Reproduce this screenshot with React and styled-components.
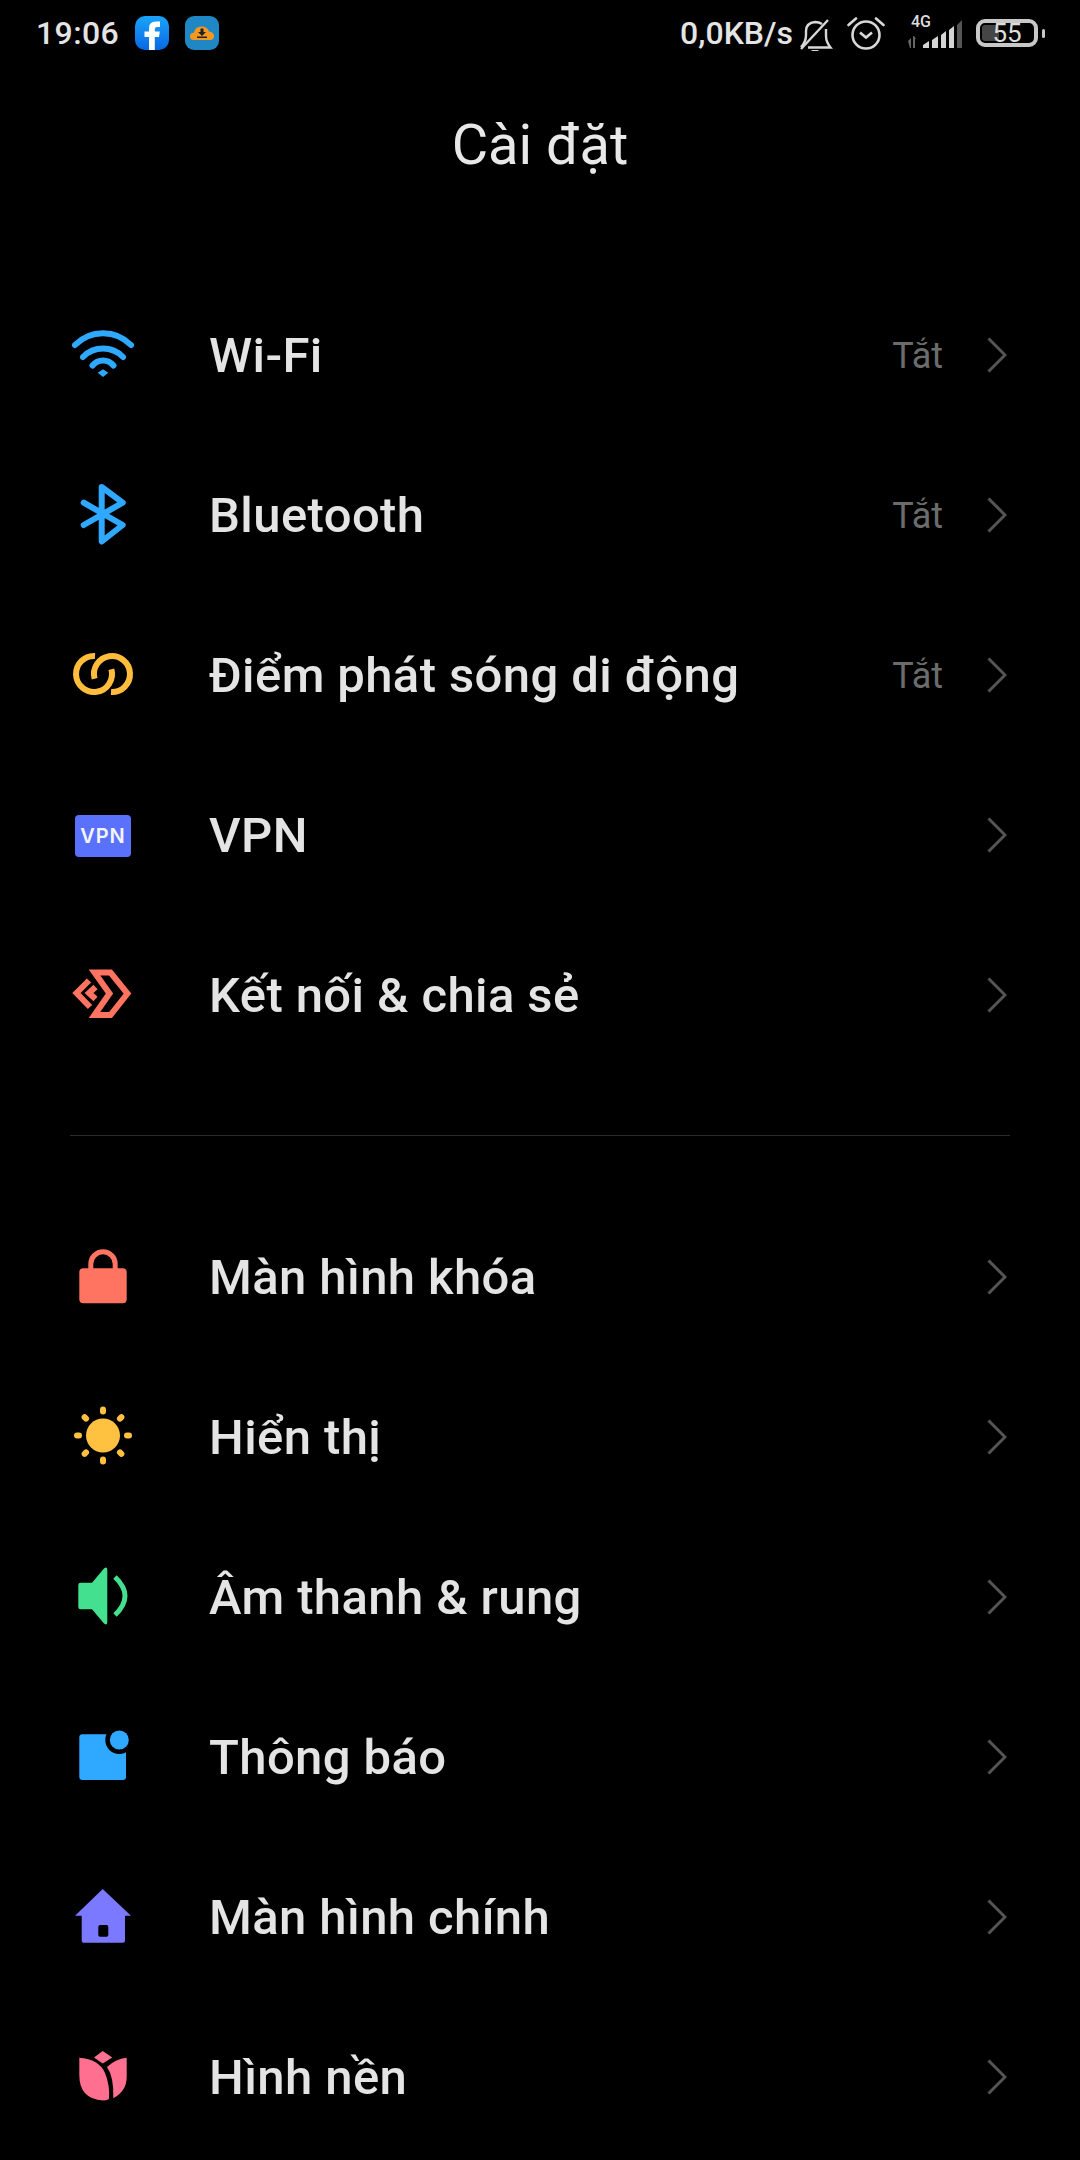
import React from "react";
import styled, { createGlobalStyle } from "styled-components";

const GlobalStyle = createGlobalStyle`
  html, body {
    margin: 0;
    padding: 0;
    background: #000;
  }
  body {
    font-family: Roboto, "Noto Sans", sans-serif;
  }
`;

const Page = styled.div`
  width: 1080px;
  height: 2160px;
  background: #000;
  overflow: hidden;
`;

const StatusBar = styled.div`
  height: 66px;
  display: flex;
  align-items: center;
  justify-content: space-between;
  padding: 0 35px 0 36px;
  color: #e4e4e4;
`;

const StatusGroup = styled.div`
  display: flex;
  align-items: center;
`;

const StatusText = styled.span`
  font-size: 32px;
  font-weight: 500;
  letter-spacing: ${(p) => p.$spacing || 0}px;
  line-height: 66px;
  margin-right: ${(p) => p.$after || 0}px;
`;

const StatusSvg = styled.svg`
  display: block;
  flex: none;
  margin-right: ${(p) => p.$after || 0}px;
`;

const SignalWrap = styled.div`
  position: relative;
  width: 60px;
  height: 34px;
  margin-right: 13px;
`;

const NetLabel = styled.span`
  position: absolute;
  left: 8px;
  top: -2px;
  font-size: 16px;
  font-weight: 500;
  line-height: 16px;
  color: #ddd;
`;

const Battery = styled.div`
  position: relative;
  box-sizing: border-box;
  width: 62px;
  height: 28px;
  border: 4px solid #c8c8c8;
  border-radius: 9px;
  display: flex;
  align-items: center;
  justify-content: center;
  font-size: 26px;
  color: #dcdcdc;
`;

const BatteryFill = styled.div`
  position: absolute;
  left: 2px;
  top: 2px;
  bottom: 2px;
  border-radius: 3px;
  background: #454545;
`;

const BatteryText = styled.span`
  position: relative;
  line-height: 20px;
`;

const BatteryTip = styled.div`
  width: 3px;
  height: 9px;
  margin-left: 4px;
  border-radius: 2px;
  background: #c8c8c8;
`;

const Title = styled.h1`
  margin: 0;
  height: 158px;
  display: flex;
  align-items: center;
  justify-content: center;
  font-size: 56px;
  font-weight: 400;
  color: #e8e8e8;
`;

const Section = styled.section`
  padding-top: ${(p) => p.$top}px;
`;

const Row = styled.div`
  height: 160px;
  display: flex;
  align-items: center;
  padding: 0 73px 0 63px;
`;

const IconBox = styled.div`
  width: 80px;
  height: 80px;
  flex: none;
  display: flex;
  align-items: center;
  justify-content: center;
  margin-right: 66px;
`;

const Label = styled.span`
  flex: 1;
  font-size: 49px;
  font-weight: 500;
  letter-spacing: 0.4px;
  color: #e4e4e4;
`;

const Value = styled.span`
  font-size: 36px;
  color: #6c6c6c;
  margin: 2px 44px 0 0;
`;

const Divider = styled.div`
  height: 1px;
  margin: 60px 70px 0;
  background: #2b2b2b;
`;

const VpnBadge = styled.div`
  width: 56px;
  height: 42px;
  border-radius: 4px;
  background: #5a71fb;
  color: #f4f6ff;
  display: flex;
  align-items: center;
  justify-content: center;
  font-family: Inter, Roboto, sans-serif;
  font-size: 20px;
  font-weight: 600;
  letter-spacing: 1px;
  margin-top: 2px;
`;

const Glyph = ({ children }) => (
  <svg width="80" height="80" viewBox="0 0 80 80" fill="none">
    {children}
  </svg>
);

const WifiIcon = () => (
  <Glyph>
    <g stroke="#2fa9ff" strokeWidth="6" strokeLinecap="round">
      <path d="M12 30A39 39 0 0 1 68 30" />
      <path d="M20 42A28 28 0 0 1 60 42" />
      <path d="M29.5 50.5A13.5 13.5 0 0 1 50.5 50.5" />
    </g>
    <path d="M34.7 57.7L40 54.3L45.3 57.7L40 62Z" fill="#2fa9ff" />
  </Glyph>
);

const BluetoothIcon = () => (
  <Glyph>
    <path
      d="M20.7 27.7L59.7 50L38.7 66.5V12L59.7 27.7L20.7 50"
      stroke="#2fa9ff"
      strokeWidth="6"
      strokeLinecap="round"
      strokeLinejoin="round"
    />
  </Glyph>
);

const HotspotIcon = () => (
  <Glyph>
    <g stroke="#ffbd3b" strokeWidth="6">
      <path d="M32 21A18 18 0 1 0 48.4 34.3" />
      <path d="M48 57A18 18 0 1 0 31.6 43.7" />
    </g>
  </Glyph>
);

const ShareIcon = () => (
  <Glyph>
    <g stroke="#ff7361" strokeWidth="6" strokeLinejoin="miter">
      <path d="M31.5 17.5H47.5L64.5 38.5L47.5 60H31.5L46.5 38.5Z" />
      <path d="M26 25.5L13.5 38L27 52" />
      <path d="M32.5 32L26 38L32.5 44" />
    </g>
  </Glyph>
);

const LockIcon = () => (
  <Glyph>
    <rect x="16.3" y="31.3" width="47.4" height="35" rx="4" fill="#ff7361" />
    <path d="M27.8 33V27A12.2 12.2 0 0 1 52.2 27V33" stroke="#ff7361" strokeWidth="5" />
  </Glyph>
);

const SunIcon = () => (
  <Glyph>
    <circle cx="40" cy="38.5" r="17" fill="#ffc13f" />
    <g stroke="#ffc13f" strokeWidth="6" strokeLinecap="round">
      {[0, 45, 90, 135, 180, 225, 270, 315].map((a) => (
        <path key={a} d="M40 12.5V14.5" transform={`rotate(${a} 40 38.5)`} />
      ))}
    </g>
  </Glyph>
);

const SoundIcon = () => (
  <Glyph>
    <path
      d="M17.5 25.7H29L41 11.5Q44.3 9 44.3 13V65Q44.3 69 41 66.5L29 52.3H17.5Q15.3 52.3 15.3 50V28Q15.3 25.7 17.5 25.7Z"
      fill="#43e08f"
    />
    <path d="M52 20Q72 39 52 58" stroke="#43e08f" strokeWidth="5" />
  </Glyph>
);

const NoticeIcon = () => (
  <Glyph>
    <rect x="16.3" y="17.3" width="46.7" height="45.7" rx="3" fill="#2fa9ff" />
    <circle cx="56.3" cy="23" r="14" fill="#000" />
    <circle cx="56.3" cy="23" r="9.5" fill="#2fa9ff" />
  </Glyph>
);

const HomeIcon = () => (
  <Glyph>
    <path
      fillRule="evenodd"
      d="M39.7 12L68 38.7H62V63.5Q62 65.7 60 65.7H20.7Q18.7 65.7 18.7 63.5V38.7H12ZM37 48Q35.3 48 35.3 50V58Q35.3 59.7 37 59.7H43.6Q45.3 59.7 45.3 58V50Q45.3 48 43.6 48Z"
      fill="#7b79ff"
    />
  </Glyph>
);

const TulipIcon = () => (
  <Glyph>
    <g fill="#ff6f8f">
      <path d="M39.7 14L49.3 20.5L39.7 26.5L31 20.5Z" />
      <path d="M16.3 20.7Q36 22 42 36Q47 48 46 62Q43 63.5 40 63.5Q16.3 62 16.3 38Z" />
      <path d="M63.7 20.7V40Q63.7 54 50.3 61.3Q51 40 44 30Q52 22 63.7 20.7Z" />
    </g>
  </Glyph>
);

const Chevron = () => (
  <svg width="20" height="36" viewBox="0 0 20 36" fill="none">
    <path d="M1.5 1.5L18 18L1.5 34.5" stroke="#555" strokeWidth="3" />
  </svg>
);

const connectivity = [
  { label: "Wi-Fi", value: "Tắt", icon: <WifiIcon /> },
  { label: "Bluetooth", value: "Tắt", icon: <BluetoothIcon /> },
  { label: "Điểm phát sóng di động", value: "Tắt", icon: <HotspotIcon /> },
  { label: "VPN", icon: <VpnBadge>VPN</VpnBadge> },
  { label: "Kết nối & chia sẻ", icon: <ShareIcon /> },
];

const personal = [
  { label: "Màn hình khóa", icon: <LockIcon /> },
  { label: "Hiển thị", icon: <SunIcon /> },
  { label: "Âm thanh & rung", icon: <SoundIcon /> },
  { label: "Thông báo", icon: <NoticeIcon /> },
  { label: "Màn hình chính", icon: <HomeIcon /> },
  { label: "Hình nền", icon: <TulipIcon /> },
];

const SettingRow = ({ item }) => (
  <Row>
    <IconBox>{item.icon}</IconBox>
    <Label>{item.label}</Label>
    {item.value && <Value>{item.value}</Value>}
    <Chevron />
  </Row>
);

const App = () => (
  <Page>
    <GlobalStyle />
    <StatusBar>
      <StatusGroup>
        <StatusText $after={16} $spacing={0.4}>19:06</StatusText>
        <StatusSvg $after={16} width="34" height="34" viewBox="0 0 34 34">
          <defs>
            <linearGradient id="fb" x1="0" y1="0" x2="0" y2="1">
              <stop offset="0" stopColor="#1aa5fb" />
              <stop offset="1" stopColor="#0868e4" />
            </linearGradient>
          </defs>
          <rect width="34" height="34" rx="10" fill="url(#fb)" />
          <path
            d="M14 34V21H9.5V15.5H14V12Q14 5.5 21 5.5H25V11H22Q19.8 11 19.8 13.2V15.5H24.8L24 21H19.8V34Z"
            fill="#fff"
          />
        </StatusSvg>
        <StatusSvg width="34" height="34" viewBox="0 0 34 34">
          <rect width="34" height="34" rx="9" fill="#1f88c4" />
          <path
            d="M9 24Q5 24 5 20.5Q5 17 9 16.5Q10 10.5 16.5 10.5Q22 10.5 24 15.5Q29 16 29 20Q29 24 25 24Z"
            fill="#f6981f"
          />
          <path d="M15.5 12.5H18.5V16H21L17 20L13 16H15.5ZM12 20.5H22V22H12Z" fill="#21211f" />
        </StatusSvg>
      </StatusGroup>
      <StatusGroup>
        <StatusText $after={6}>0,0KB/s</StatusText>
        <StatusSvg $after={14} width="34" height="36" viewBox="0 0 34 36" fill="none">
          <g stroke="#d8d8d8" strokeWidth="2.4">
            <path d="M2 32Q7 27 7 20V16Q7 8 16 7Q20 7 23 9" />
            <path d="M27 14V21Q27 27 31.5 32.5H9" />
            <path d="M2 34L29 5" />
          </g>
          <path d="M12 35H20Q16 39 12 35Z" fill="#d8d8d8" />
        </StatusSvg>
        <StatusSvg $after={18} width="38" height="36" viewBox="0 0 38 36" fill="none">
          <g stroke="#d8d8d8" strokeWidth="2.6">
            <circle cx="19" cy="20" r="13.5" />
            <path d="M13 17.5L19 22.5L25 17.5" />
            <path d="M1.5 10L9 3.5" strokeLinecap="round" />
            <path d="M29 3.5L36.5 10" strokeLinecap="round" />
          </g>
        </StatusSvg>
        <SignalWrap>
          <NetLabel>4G</NetLabel>
          <StatusSvg width="60" height="34" viewBox="0 0 60 34">
            <path d="M5 25L8 22V32H7ZM10 20H11L13 23H12V32H10Z" fill="#666" />
            <path d="M20 29L26 25V32H20Z" fill="#d4d4d4" />
            <path d="M29 24L35 20V32H29Z" fill="#d4d4d4" />
            <path d="M38 19L43 15V32H38Z" fill="#d4d4d4" />
            <path d="M46 14L51 10V32H46Z" fill="#d4d4d4" />
            <path d="M54 9L59 4V32H54Z" fill="#555" />
          </StatusSvg>
        </SignalWrap>
        <Battery>
          <BatteryFill style={{ width: "32%" }} />
          <BatteryText>55</BatteryText>
        </Battery>
        <BatteryTip />
      </StatusGroup>
    </StatusBar>
    <Title>Cài đặt</Title>
    <Section $top={51}>
      {connectivity.map((item) => (
        <SettingRow key={item.label} item={item} />
      ))}
    </Section>
    <Divider />
    <Section $top={61}>
      {personal.map((item) => (
        <SettingRow key={item.label} item={item} />
      ))}
    </Section>
  </Page>
);

export default App;
